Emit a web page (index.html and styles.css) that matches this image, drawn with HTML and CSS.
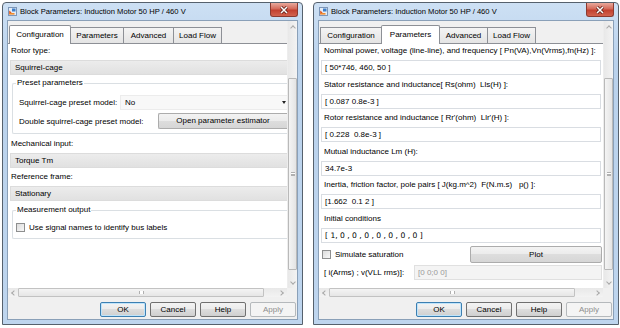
FILE: index.html
```html
<!DOCTYPE html>
<html>
<head>
    <title>Block Parameters</title>
    <link rel="stylesheet" href="styles.css">
</head>
<body>
<div class="desk">

    <!-- Configuration tab -->
    <div class="window win-left">
        <div class="titlebar">
            <svg class="app-icon" width="9" height="9" viewBox="0 0 9 9">
                <rect x="0.5" y="0.5" width="8" height="8" fill="#e4ecf5" stroke="#7d96b8"/>
                <rect x="4" y="1.5" width="3.5" height="3" fill="#3d7fc9"/>
                <path d="M1.2 7.8 L1.2 3.6 L3.6 5.6 Z" fill="#e2541c"/>
                <rect x="1.5" y="6" width="5" height="1.6" fill="#f08a2c"/>
            </svg>
            <span class="title">Block Parameters: Induction Motor 50 HP / 460 V</span>
            <div class="close">
                <svg width="10" height="8" viewBox="0 0 10 8">
                    <path d="M2 1 L8 7 M8 1 L2 7" stroke="#5a1d16" stroke-width="3"/>
                    <path d="M2 1 L8 7 M8 1 L2 7" stroke="#fff" stroke-width="1.5"/>
                </svg>
            </div>
        </div>
        <div class="client">
            <div class="scroller">
                <div class="viewport">
                    <div class="tabs">
                        <div class="tab t-conf active">Configuration</div>
                        <div class="tab t-par">Parameters</div>
                        <div class="tab t-adv">Advanced</div>
                        <div class="tab t-lf">Load Flow</div>
                    </div>
                    <div class="panel">
                        <div class="lbl">Rotor type:</div>
                        <div class="combo">Squirrel-cage</div>

                        <fieldset class="group">
                            <legend>Preset parameters</legend>
                            <div class="grow">
                                <span class="glabel w-preset">Squirrel-cage preset model:</span>
                                <div class="combo light">No<span class="caret"></span></div>
                            </div>
                            <div class="grow second">
                                <span class="glabel w-double">Double squirrel-cage preset model:</span>
                                <div class="pbtn">Open parameter estimator</div>
                            </div>
                        </fieldset>

                        <div class="lbl gap">Mechanical input:</div>
                        <div class="combo">Torque Tm</div>
                        <div class="lbl gap-s">Reference frame:</div>
                        <div class="combo">Stationary</div>

                        <fieldset class="group measure">
                            <legend>Measurement output</legend>
                            <div class="check-row">
                                <span class="check"></span>
                                <span>Use signal names to identify bus labels</span>
                            </div>
                        </fieldset>
                    </div>
                </div>
                <div class="vscroll">
                    <div class="sarrow"><span class="chev up"></span></div>
                    <div class="vtrack-top"></div>
                    <div class="vthumb"><span class="grip-v"></span></div>
                    <div class="vtrack-rest"></div>
                    <div class="sarrow"><span class="chev down"></span></div>
                </div>
                <div class="hscroll">
                    <div class="sarrow-h"><span class="chev left"></span></div>
                    <div class="hthumb"><span class="grip-h"></span></div>
                    <div class="htrack-rest"></div>
                    <div class="sarrow-h"><span class="chev right"></span></div>
                </div>
                <div class="corner"></div>
            </div>
            <div class="buttons">
                <div class="btn default">OK</div>
                <div class="btn">Cancel</div>
                <div class="btn">Help</div>
                <div class="btn disabled">Apply</div>
            </div>
        </div>
    </div>

    <!-- Parameters tab -->
    <div class="window win-right">
        <div class="titlebar">
            <svg class="app-icon" width="9" height="9" viewBox="0 0 9 9">
                <rect x="0.5" y="0.5" width="8" height="8" fill="#e4ecf5" stroke="#7d96b8"/>
                <rect x="4" y="1.5" width="3.5" height="3" fill="#3d7fc9"/>
                <path d="M1.2 7.8 L1.2 3.6 L3.6 5.6 Z" fill="#e2541c"/>
                <rect x="1.5" y="6" width="5" height="1.6" fill="#f08a2c"/>
            </svg>
            <span class="title">Block Parameters: Induction Motor 50 HP / 460 V</span>
            <div class="close">
                <svg width="10" height="8" viewBox="0 0 10 8">
                    <path d="M2 1 L8 7 M8 1 L2 7" stroke="#5a1d16" stroke-width="3"/>
                    <path d="M2 1 L8 7 M8 1 L2 7" stroke="#fff" stroke-width="1.5"/>
                </svg>
            </div>
        </div>
        <div class="client">
            <div class="scroller">
                <div class="viewport">
                    <div class="tabs">
                        <div class="tab t-conf">Configuration</div>
                        <div class="tab t-par active">Parameters</div>
                        <div class="tab t-adv">Advanced</div>
                        <div class="tab t-lf">Load Flow</div>
                    </div>
                    <div class="panel params">
                        <div class="lbl">Nominal power, voltage (line-line), and frequency [ Pn(VA),Vn(Vrms),fn(Hz) ]:</div>
                        <div class="field">[ 50*746, 460, 50 ]</div>
                        <div class="lbl">Stator resistance and inductance[ Rs(ohm)&nbsp; Lls(H) ]:</div>
                        <div class="field">[ 0.087 0.8e-3 ]</div>
                        <div class="lbl">Rotor resistance and inductance [ Rr'(ohm)&nbsp; Llr'(H) ]:</div>
                        <div class="field">[ 0.228&nbsp; 0.8e-3 ]</div>
                        <div class="lbl">Mutual inductance Lm (H):</div>
                        <div class="field">34.7e-3</div>
                        <div class="lbl">Inertia, friction factor, pole pairs [ J(kg.m^2)&nbsp; F(N.m.s)&nbsp;&nbsp; p() ]:</div>
                        <div class="field">[1.662&nbsp; 0.1 2 ]</div>
                        <div class="lbl">Initial conditions</div>
                        <div class="field mono">[ 1, 0 , 0 , 0 , 0 , 0 , 0 , 0 ]</div>
                        <div class="sat-row">
                            <span class="check"></span>
                            <span>Simulate saturation</span>
                            <div class="pbtn plot">Plot</div>
                        </div>
                        <div class="sat-data">
                            <span>[ i(Arms) ; v(VLL rms)]:</span>
                            <div class="field disabled">[0 0;0 0]</div>
                        </div>
                    </div>
                </div>
                <div class="vscroll">
                    <div class="sarrow"><span class="chev up"></span></div>
                    <div class="vtrack-top"></div>
                    <div class="vthumb"><span class="grip-v"></span></div>
                    <div class="vtrack-rest"></div>
                    <div class="sarrow"><span class="chev down"></span></div>
                </div>
                <div class="hscroll">
                    <div class="sarrow-h"><span class="chev left"></span></div>
                    <div class="hthumb"><span class="grip-h"></span></div>
                    <div class="htrack-rest"></div>
                    <div class="sarrow-h"><span class="chev right"></span></div>
                </div>
                <div class="corner"></div>
            </div>
            <div class="buttons">
                <div class="btn default">OK</div>
                <div class="btn">Cancel</div>
                <div class="btn">Help</div>
                <div class="btn disabled">Apply</div>
            </div>
        </div>
    </div>

</div>
</body>
</html>
```

FILE: styles.css
```css
* {
    box-sizing: border-box;
}

body {
    margin: 0;
    background-color: #fff;
    font-family: "Liberation Sans", Arial, sans-serif;
    font-size: 8px;
    color: #000;
}

.desk {
    display: flex;
    gap: 10px;
    padding: 2px 0 0 2px;
}

/* window frame */
.window {
    width: 301px;
    height: 323px;
    border: 1px solid #56616d;
    border-radius: 4px 4px 0 0;
    background: linear-gradient(#cde0f4, #bad2ec 60px, #bed5ee);
    padding: 0 4px 4px;
    display: flex;
    flex-direction: column;
}

.win-right {
    width: 306px;
}

.titlebar {
    height: 17px;
    display: flex;
    align-items: center;
    gap: 3px;
    padding-left: 1px;
    position: relative;
}

.title {
    font-size: 7.6px;
}

.app-icon {
    display: block;
}

.close {
    position: absolute;
    top: 0;
    right: 0;
    width: 28px;
    height: 14px;
    border: 1px solid #8b3a30;
    border-top: none;
    border-radius: 0 0 3px 3px;
    background: linear-gradient(#e9a99c, #d46a5a 45%, #c2402f 55%, #d2634f);
    display: flex;
    align-items: center;
    justify-content: center;
}

.close svg {
    display: block;
}

.client {
    flex: 1;
    border: 1px solid #8aa0b8;
    background-color: #f0f0f0;
    display: flex;
    flex-direction: column;
}

.scroller {
    flex: 1;
    display: grid;
    grid-template-columns: 1fr 10px;
    grid-template-rows: 1fr 9px;
    min-height: 0;
}

.viewport {
    overflow: hidden;
    display: flex;
    flex-direction: column;
    min-width: 0;
}

/* tabs */
.tabs {
    height: 22px;
    display: flex;
    align-items: flex-end;
    padding-left: 1px;
    background-color: #f0f0f0;
}

.tab {
    height: 16px;
    line-height: 15px;
    text-align: center;
    border: 1px solid #8d9096;
    border-bottom: none;
    margin-right: -1px;
    background: linear-gradient(#f4f4f4, #e4e4e4);
    white-space: nowrap;
}

.tab.active {
    height: 19px;
    line-height: 17px;
    margin-bottom: -1px;
    background: #fff;
    border-radius: 2px 2px 0 0;
    position: relative;
    z-index: 1;
}

.win-left .t-conf { width: 62px; }
.win-left .t-par { width: 54px; }
.win-left .t-adv { width: 51px; }
.win-left .t-lf { width: 49px; }

.win-right .t-conf { width: 62px; }
.win-right .t-par { width: 59px; }
.win-right .t-adv { width: 49px; }
.win-right .t-lf { width: 49px; }

.panel {
    flex: 1;
    border-top: 1px solid #8d9096;
    background-color: #fff;
    padding: 0 0 0 2px;
    display: flex;
    flex-direction: column;
    white-space: nowrap;
}

.lbl {
    height: 14px;
    line-height: 14px;
    padding-left: 1px;
}

.lbl.gap {
    margin-top: 3px;
}

.lbl.gap-s {
    margin-top: 2px;
}

.combo {
    height: 15px;
    line-height: 13px;
    margin-top: 2px;
    padding-left: 4px;
    background: linear-gradient(#ececec, #e1e1e1);
    border: 1px solid #dcdcdc;
    border-right: none;
    position: relative;
}

.combo.light {
    flex: 1;
    margin-top: 0;
    background: #f8f8f8;
    border-color: #ececec;
}

.caret {
    position: absolute;
    right: 1px;
    top: 5px;
    border-left: 2.5px solid transparent;
    border-right: 2.5px solid transparent;
    border-top: 3px solid #222;
}

/* group boxes */
.group {
    margin: 3px 0 0 2px;
    padding: 7px 0 4px 6px;
    border: 1px solid #dadfe3;
    border-right: none;
    border-radius: 2px 0 0 2px;
    min-width: 0;
}

.group legend {
    line-height: 10px;
    padding: 0 1px;
    margin-left: -3px;
}

.group.measure {
    margin-top: 4px;
    padding-top: 5px;
}

.grow {
    display: flex;
    align-items: center;
    height: 15px;
}

.grow.second {
    margin-top: 3px;
    height: 16px;
}

.glabel {
    flex: none;
}

.w-preset {
    width: 101px;
}

.w-double {
    width: 139px;
}

.pbtn {
    flex: 1;
    height: 16px;
    line-height: 14px;
    text-align: center;
    border: 1px solid #acacac;
    border-right: none;
    border-radius: 2px 0 0 2px;
    background: linear-gradient(#f3f3f3, #ebebeb 50%, #dddddd 50%, #d6d6d6);
}

.check-row {
    display: flex;
    align-items: center;
    gap: 4px;
    height: 14px;
    margin-left: -3px;
}

.check {
    width: 9px;
    height: 9px;
    flex: none;
    border: 1px solid #8e8f8f;
    background: linear-gradient(135deg, #dcdcdc, #f8f8f8);
}

/* parameters tab */
.params .lbl {
    padding-left: 3px;
    margin-top: 2.5px;
}

.params .lbl:first-child {
    margin-top: 0;
}

.field {
    height: 15px;
    line-height: 13px;
    margin: 2px 2px 0 0;
    padding-left: 3px;
    border: 1px solid #d9dde2;
    background-color: #fff;
}

.field.mono {
    font-family: "DejaVu Sans", Verdana, sans-serif;
    font-size: 7.6px;
}

.sat-row {
    display: flex;
    align-items: center;
    gap: 4px;
    height: 17px;
    margin-top: 3.5px;
    padding-left: 1px;
}

.pbtn.plot {
    flex: none;
    width: 132px;
    height: 17px;
    line-height: 15px;
    margin: 0 1px 0 auto;
    border-right: 1px solid #acacac;
    border-radius: 2px;
}

.sat-data {
    display: flex;
    align-items: center;
    height: 15px;
    margin-top: 2px;
    padding-left: 3px;
}

.sat-data span {
    width: 90px;
    flex: none;
}

.field.disabled {
    flex: 1;
    margin: 0 1px 0 0;
    background-color: #f4f4f4;
    color: #9a9a9a;
    border-color: #e0e0e0;
}

/* scrollbars */
.vscroll {
    display: flex;
    flex-direction: column;
    background: linear-gradient(90deg, #e8e8e8, #f3f3f3);
    border-left: 1px solid #ededed;
}

.sarrow {
    height: 11px;
    display: flex;
    align-items: center;
    justify-content: center;
}

.vtrack-top {
    height: 46px;
}

.vthumb {
    height: 192px;
    border: 1px solid #b9b9b9;
    border-radius: 1px;
    background: linear-gradient(90deg, #f4f4f4, #e4e4e4);
    display: flex;
    align-items: center;
    justify-content: center;
}

.grip-v {
    width: 4px;
    height: 4px;
    border-top: 1px solid #b0b0b0;
    border-bottom: 1px solid #b0b0b0;
    box-shadow: inset 0 1px 0 #fff, inset 0 -1px 0 #b0b0b0;
}

.vtrack-rest {
    flex: 1;
}

.hscroll {
    display: flex;
    background: linear-gradient(#e8e8e8, #f3f3f3);
}

.sarrow-h {
    width: 10px;
    display: flex;
    align-items: center;
    justify-content: center;
}

.hthumb {
    width: 246px;
    border: 1px solid #c2c2c2;
    border-radius: 1px;
    background: linear-gradient(#f4f4f4, #e6e6e6);
    display: flex;
    align-items: center;
    justify-content: center;
}

.grip-h {
    width: 5px;
    height: 3px;
    border-left: 1px solid #b0b0b0;
    border-right: 1px solid #b0b0b0;
    box-shadow: inset 2px 0 0 #fff, inset -2px 0 0 #fff;
    background-color: #b0b0b0;
}

.htrack-rest {
    flex: 1;
}

.chev {
    width: 4px;
    height: 4px;
    border-left: 1px solid #a8a8a8;
    border-top: 1px solid #a8a8a8;
}

.chev.up {
    transform: translateY(1px) rotate(45deg);
}

.chev.down {
    transform: translateY(-1px) rotate(225deg);
}

.chev.left {
    transform: translateX(1px) rotate(-45deg);
}

.chev.right {
    transform: translateX(-1px) rotate(135deg);
}

.corner {
    background-color: #f0f0f0;
}

/* dialog buttons */
.buttons {
    height: 22px;
    display: flex;
    justify-content: flex-end;
    align-items: center;
    gap: 4px;
    padding: 3px 1px 1px 0;
}

.btn {
    width: 46px;
    height: 15px;
    line-height: 13px;
    text-align: center;
    border: 1px solid #707070;
    border-radius: 2px;
    background: linear-gradient(#f3f3f3, #ebebeb 50%, #dddddd 50%, #cfcfcf);
}

.btn.default {
    border-color: #3c7fb1;
    box-shadow: inset 0 0 0 1px #bfe4fb;
}

.btn.disabled {
    border-color: #b5b9bc;
    background: #f4f4f4;
    color: #8d8d8d;
}
```
